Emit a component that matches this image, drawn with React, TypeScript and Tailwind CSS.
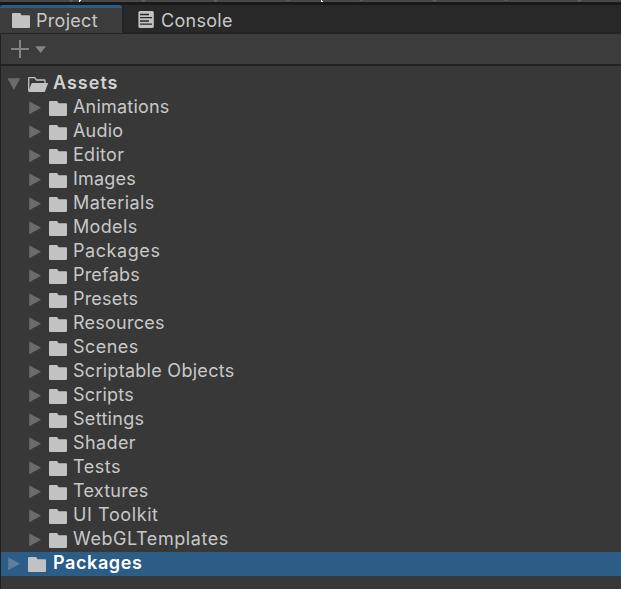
import React from "react";

const folders = [
  { name: "Animations", tracking: "tracking-[0.2px]" },
  { name: "Audio", tracking: "tracking-[0.2px]" },
  { name: "Editor", tracking: "tracking-[0.3px]" },
  { name: "Images", tracking: "tracking-[0.2px]" },
  { name: "Materials", tracking: "tracking-[0.4px]" },
  { name: "Models", tracking: "tracking-[0.35px]" },
  { name: "Packages", tracking: "tracking-[0.57px]" },
  { name: "Prefabs", tracking: "tracking-[0.2px]" },
  { name: "Presets", tracking: "tracking-[0.2px]" },
  { name: "Resources", tracking: "tracking-[0.25px]" },
  { name: "Scenes", tracking: "tracking-[0.45px]" },
  { name: "Scriptable Objects", tracking: "tracking-[0.28px]" },
  { name: "Scripts", tracking: "tracking-[0.2px]" },
  { name: "Settings", tracking: "tracking-[0.3px]" },
  { name: "Shader", tracking: "tracking-[0.4px]" },
  { name: "Tests", tracking: "tracking-[0.5px]" },
  { name: "Textures", tracking: "tracking-[0.25px]" },
  { name: "UI Toolkit", tracking: "tracking-[0.6px]" },
  { name: "WebGLTemplates", tracking: "tracking-[0.57px]" },
];

function FolderIcon() {
  return (
    <svg width="18" height="15" viewBox="0 0 18 15" className="block shrink-0" fill="#c2c2c2">
      <path d="M0 1Q0 0 1 0H7.5Q8.4 0 8.8 .8L9.5 2.2H17Q18 2.2 18 3.2V14Q18 15 17 15H1Q0 15 0 14Z" />
    </svg>
  );
}

function OpenFolderIcon() {
  return (
    <svg width="20" height="15" viewBox="0 0 20 15" className="block shrink-0">
      <path d="M.7 14V1.2Q.7 .7 1.2 .7H6.7L8.5 3H16.3Q17 3 17 3.7V6" fill="none" stroke="#c2c2c2" strokeWidth="1.3" />
      <path d="M4.3 6H19.4Q20.2 6 19.9 6.8L17.2 14Q16.8 15 16 15H.5V14L3.4 6.7Q3.7 6 4.3 6Z" fill="#c2c2c2" />
    </svg>
  );
}

function Arrow({ open = false, color = "#6b6b6b" }: { open?: boolean; color?: string }) {
  return (
    <svg width="12" height="14" viewBox="0 0 12 14" className="block shrink-0 overflow-visible" fill={color}>
      <path d={open ? "M-.5 1.3H12.3L5.9 13Z" : "M.2 .3L12 6.8L.2 13.3Z"} />
    </svg>
  );
}

function FolderRow({ name, tracking }: { name: string; tracking: string }) {
  return (
    <li className="flex h-6 items-start pl-[28px]">
      <span className="pt-[5px]"><Arrow /></span>
      <span className="ml-2 pt-[5px]"><FolderIcon /></span>
      <span className={"ml-[6px] -mt-px whitespace-nowrap " + tracking}>{name}</span>
    </li>
  );
}

export default function App() {
  return (
    <main className="flex h-[589px] w-[621px] flex-col overflow-hidden bg-[#383838] font-['Inter',sans-serif] text-[18px] leading-6 tracking-[0.3px] text-[#c8c8c8]">
      <div className="h-[5px] shrink-0 border-b-[3px] border-[#191919] bg-[#484848]">
        <svg width="621" height="2" className="block" fill="#5d5d5d">
          <path d="M69 0h4l-1 2h-2zM141 0h5l-2 2h-1zM214 0h4l-2 2h-2zM286 0h5l-2 1h-2zM359 0h5l-2 1h-2zM432 0h5l-2 2h-1zM504 0h5l-2 1h-2zM577 0h5l-2 2h-1z" />
          <path d="M79 0h2v1h-1v1h-1zM321 0h1v1h1v1h-2z" fill="#fff" />
        </svg>
      </div>
      <header className="flex h-[29px] shrink-0 border-b-2 border-[#232323] bg-[#282828]">
        <div className="flex h-[28px] w-[122px] shrink-0 items-center rounded-t-[3px] border-t-[3px] border-[#2c5d87] bg-[#3c3c3c] pl-3">
          <FolderIcon />
          <span className="ml-[6px] mt-px">Project</span>
        </div>
        <div className="flex h-[28px] items-center border-l-2 border-[#232323] pl-[14px]">
          <svg width="16" height="17" viewBox="0 0 16 17" className="mt-px">
            <rect x=".4" width="15.4" height="17" rx="1.5" fill="#c2c2c2" />
            <path d="M2 3.5H11M2 6.7H14M2 10H11M2 13.2H14" stroke="#282828" strokeWidth="1.3" />
          </svg>
          <span className="ml-[7px] mt-[3px]">Console</span>
        </div>
      </header>
      <section className="flex min-h-0 flex-1 flex-col border-l border-[#202020]">
        <div className="flex h-8 shrink-0 items-center border-b-2 border-[#232323] bg-[#3c3c3c] pl-[10px]">
          <svg width="18" height="18" viewBox="0 0 18 18">
            <path d="M9 0V18M0 9H18" stroke="#858585" strokeWidth="2" />
          </svg>
          <svg width="11" height="7" viewBox="0 0 11 7" className="ml-[6px]" fill="#858585">
            <path d="M0.2 0.3H11L5.6 6.9Z" />
          </svg>
        </div>
        <ul className="pt-[6px]">
          <li className="flex h-6 items-start pl-[7px] font-semibold tracking-[1px] text-[#d2d2d2]">
            <span className="pt-[5px]"><Arrow open /></span>
            <span className="ml-2 pt-[5px]"><OpenFolderIcon /></span>
            <span className="ml-[5px] -mt-px">Assets</span>
          </li>
          {folders.map((folder) => <FolderRow key={folder.name} {...folder} />)}
          <li className="flex h-6 items-start bg-[#2c5d87] pl-[7px] font-semibold tracking-[0.6px] text-white">
            <span className="pt-[5px]"><Arrow color="#5f7f9b" /></span>
            <span className="ml-2 pt-[5px]"><FolderIcon /></span>
            <span className="ml-[7px] -mt-px">Packages</span>
          </li>
        </ul>
      </section>
    </main>
  );
}
